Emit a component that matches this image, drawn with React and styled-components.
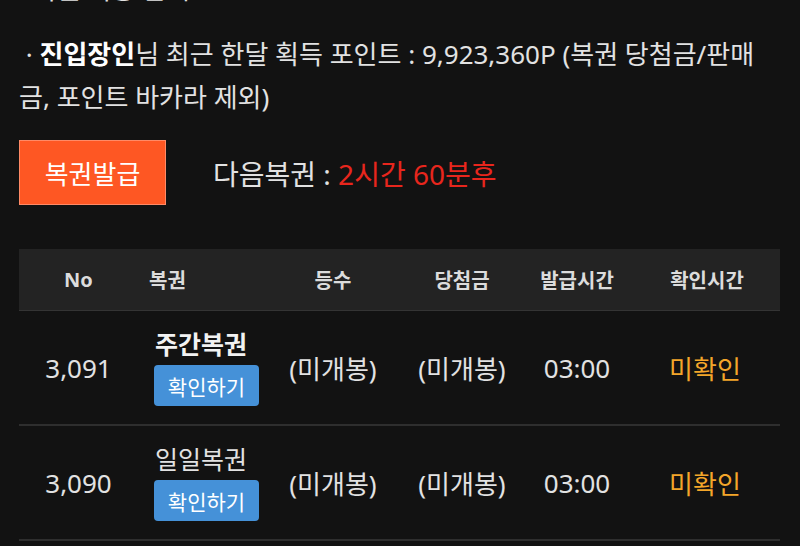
import React from "react";
import styled, { createGlobalStyle } from "styled-components";

const GlobalStyle = createGlobalStyle`
  html, body {
    margin: 0;
    padding: 0;
    background: #121212;
  }
  body {
    font-family: "Noto Sans", "Noto Sans CJK KR", sans-serif;
    color: #e2e2e2;
    overflow: hidden;
  }
`;

const Page = styled.div`
  width: 800px;
  height: 546px;
  padding: 0 20px 0 19px;
  box-sizing: border-box;
  overflow: hidden;
`;

const Notice = styled.p`
  margin: 0;
  font-size: 26px;
  line-height: 43px;
  color: #e2e2e2;
  word-break: break-all;
  ${p => p.$cut && "margin-top: -32px; margin-bottom: 22px;"}
`;

const Name = styled.strong`
  color: #ffffff;
  font-weight: 700;
`;

const IssueRow = styled.div`
  display: flex;
  align-items: center;
  gap: 47px;
  margin-top: 21px;
`;

const IssueButton = styled.button`
  width: 147px;
  height: 65px;
  background: #fe5723;
  border: 1px solid #ff8a66;
  color: #ffffff;
  font-family: inherit;
  font-size: 26px;
  padding: 0;
  cursor: pointer;
`;

const NextInfo = styled.div`
  font-size: 28px;
  color: #e2e2e2;
`;

const Countdown = styled.span`
  color: #e8261d;
`;

const Table = styled.div`
  margin-top: 44px;
  width: 761px;
`;

const columns = "119px 138px 114px 144px 86px 160px";

const HeadRow = styled.div`
  display: grid;
  grid-template-columns: ${columns};
  height: 61px;
  align-items: center;
  background: #232323;
  border-bottom: 1px solid #343434;
`;

const HeadCell = styled.div`
  font-size: 20px;
  font-weight: 700;
  color: #dcdcdc;
  text-align: ${p => (p.$left ? "left" : "center")};
  padding-left: ${p => (p.$left ? "11px" : "0")};
  &:last-child {
    padding-left: 14px;
  }
`;

const Row = styled.div`
  display: grid;
  grid-template-columns: ${columns};
  height: 113px;
  align-items: center;
  border-bottom: 2px solid #2e2e2e;
`;

const Cell = styled.div`
  font-size: 26px;
  text-align: center;
  color: ${p => p.$color || "#e2e2e2"};
  &:last-child {
    padding-left: 10px;
  }
`;

const TicketCell = styled.div`
  display: flex;
  flex-direction: column;
  align-items: flex-start;
  gap: 6px;
  padding-left: 16px;
`;

const TicketName = styled.div`
  font-size: 25px;
  line-height: 30px;
  font-weight: ${p => (p.$bold ? 700 : 400)};
  color: ${p => (p.$bold ? "#f2f2f2" : "#e2e2e2")};
  margin-left: 1px;
`;

const CheckButton = styled.button`
  width: 105px;
  height: 41px;
  border: none;
  border-radius: 4px;
  background: #4591d8;
  color: #ffffff;
  font-family: inherit;
  font-size: 21px;
  padding: 0;
  cursor: pointer;
`;

const rows = [
  { no: "3,091", name: "주간복권", bold: true, rank: "(미개봉)", prize: "(미개봉)", time: "03:00", status: "미확인" },
  { no: "3,090", name: "일일복권", bold: false, rank: "(미개봉)", prize: "(미개봉)", time: "03:00", status: "미확인" },
];

export default function App() {
  return (
    <>
      <GlobalStyle />
      <Page>
        <Notice $cut>· 복권 이용 안내</Notice>
        <Notice>
          &nbsp;· <Name>진입장인</Name>님 최근 한달 획득 포인트 : 9,923,360P (복권 당첨금/판매금, 포인트 바카라 제외)
        </Notice>
        <IssueRow>
          <IssueButton>복권발급</IssueButton>
          <NextInfo>
            다음복권 : <Countdown>2시간 60분후</Countdown>
          </NextInfo>
        </IssueRow>
        <Table>
          <HeadRow>
            <HeadCell>No</HeadCell>
            <HeadCell $left>복권</HeadCell>
            <HeadCell>등수</HeadCell>
            <HeadCell>당첨금</HeadCell>
            <HeadCell>발급시간</HeadCell>
            <HeadCell>확인시간</HeadCell>
          </HeadRow>
          {rows.map(r => (
            <Row key={r.no}>
              <Cell>{r.no}</Cell>
              <TicketCell>
                <TicketName $bold={r.bold}>{r.name}</TicketName>
                <CheckButton>확인하기</CheckButton>
              </TicketCell>
              <Cell>{r.rank}</Cell>
              <Cell>{r.prize}</Cell>
              <Cell>{r.time}</Cell>
              <Cell $color="#f4a62a">{r.status}</Cell>
            </Row>
          ))}
        </Table>
      </Page>
    </>
  );
}
